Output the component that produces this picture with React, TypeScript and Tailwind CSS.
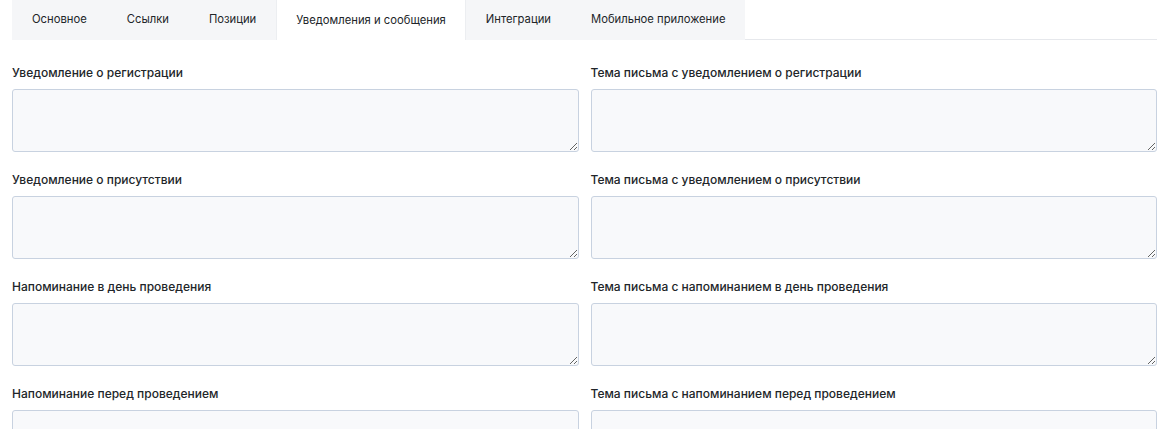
import React, { useState } from 'react';

const tabs = ['Основное', 'Ссылки', 'Позиции', 'Уведомления и сообщения', 'Интеграции', 'Мобильное приложение'];

const fields = [
  ['Уведомление о регистрации', 'Тема письма с уведомлением о регистрации'],
  ['Уведомление о присутствии', 'Тема письма с уведомлением о присутствии'],
  ['Напоминание в день проведения', 'Тема письма с напоминанием в день проведения'],
  ['Напоминание перед проведением', 'Тема письма с напоминанием перед проведением'],
];

function Field({ label }: { label: string }) {
  return (
    <div className="flex flex-col">
      <label className="text-[12px] font-medium text-[#212529] leading-4 mb-2">{label}</label>
      <textarea className="h-[63px] w-full rounded-[3px] border border-[#c8d2e0] bg-[#f8f9fb] px-3 py-2 text-[12px] outline-none" />
    </div>
  );
}

export default function App() {
  const [active, setActive] = useState(3);

  return (
    <div className="min-h-screen bg-white pl-3 pr-2 font-['Inter','Noto_Sans',sans-serif]">
      <div className="flex border-b border-[#e6e8ec]">
        {tabs.map((t, i) => (
          <button
            key={t}
            onClick={() => setActive(i)}
            className={
              i === active
                ? 'h-10 -mb-px px-[19px] text-[11.25px] text-[#212529] bg-white border-x border-[#eceef1]'
                : 'h-10 -mb-px px-5 text-[11.25px] text-[#212529] bg-[#f5f6f8] border-b border-[#f5f6f8]'
            }
          >
            {t}
          </button>
        ))}
      </div>
      <div className="grid grid-cols-2 gap-x-3 gap-y-5 pt-[25px]">
        {fields.map(([l, r]) => (
          <React.Fragment key={l}>
            <Field label={l} />
            <Field label={r} />
          </React.Fragment>
        ))}
      </div>
    </div>
  );
}
